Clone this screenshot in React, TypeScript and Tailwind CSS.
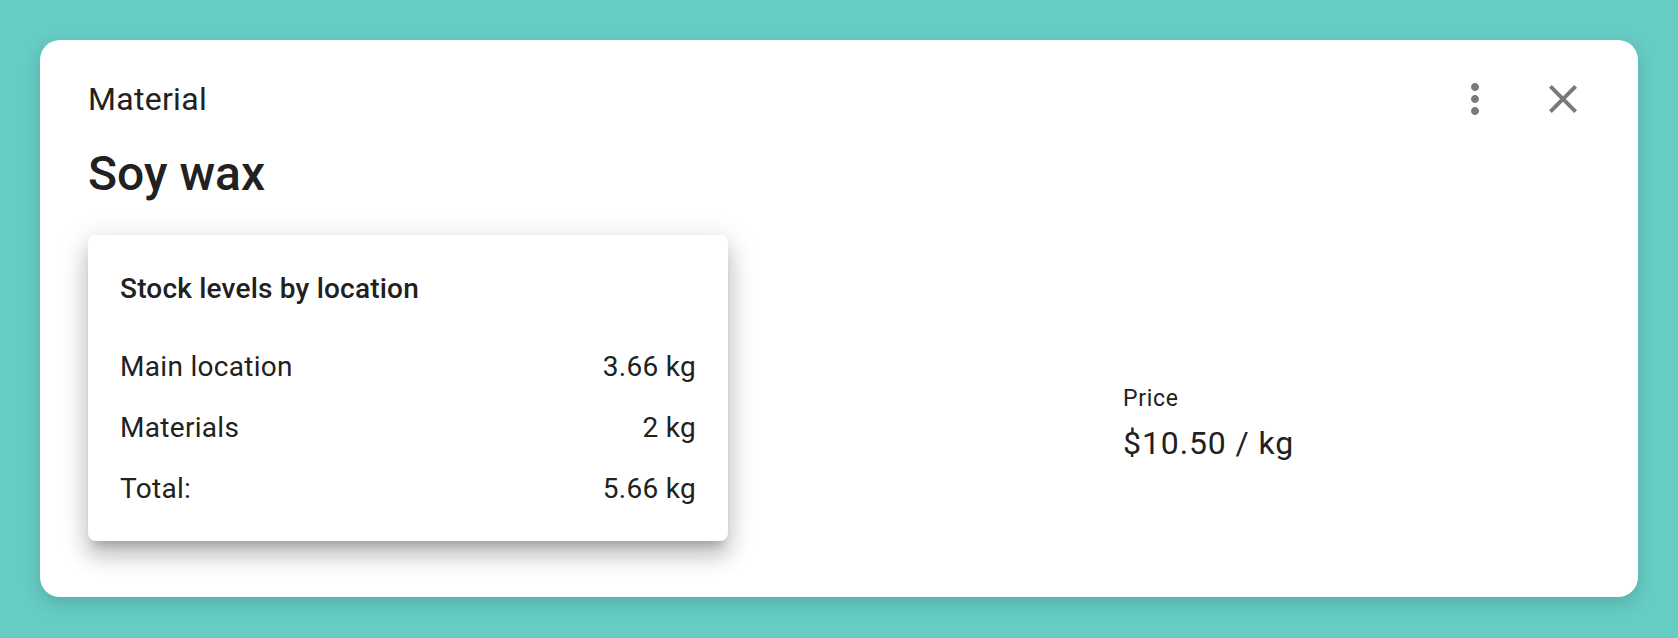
const MoreIcon = () => (
  <svg viewBox="0 0 24 24" className="h-12 w-12 fill-current">
    <path d="M12 8c1.1 0 2-.9 2-2s-.9-2-2-2-2 .9-2 2 .9 2 2 2zm0 2c-1.1 0-2 .9-2 2s.9 2 2 2 2-.9 2-2-.9-2-2-2zm0 6c-1.1 0-2 .9-2 2s.9 2 2 2 2-.9 2-2-.9-2-2-2z" />
  </svg>
);

const CloseIcon = () => (
  <svg viewBox="0 0 24 24" className="h-12 w-12 fill-current">
    <path d="M19 6.41 17.59 5 12 10.59 6.41 5 5 6.41 10.59 12 5 17.59 6.41 19 12 13.41 17.59 19 19 17.59 13.41 12z" />
  </svg>
);

const stock = [
  { name: "Main location", qty: "3.66 kg" },
  { name: "Materials", qty: "2 kg" },
  { name: "Total:", qty: "5.66 kg" },
];

export default function App() {
  return (
    <div className="min-h-[638px] bg-[#66cdc4] px-10 pt-10 pb-[41px] font-['Roboto',sans-serif] text-[#212121]">
      <div className="h-[557px] rounded-[20px] bg-white px-12 pt-[35px] shadow-[0_6px_18px_rgba(0,0,0,0.16)]">
        {/* header */}
        <div className="flex h-12 items-center justify-between">
          <div className="text-[32px] leading-[48px] tracking-[0.3px]">Material</div>
          <div className="mr-[3px] flex items-center gap-10 text-[#7a7a7a]">
            <button className="flex">
              <MoreIcon />
            </button>
            <button className="flex">
              <CloseIcon />
            </button>
          </div>
        </div>

        <h1 className="mt-5 text-[48px] font-medium leading-[61px]">Soy wax</h1>

        <div className="mt-[31px] flex items-start">
          <div className="w-[640px] rounded-[8px] bg-white p-8 shadow-[0_10px_10px_-6px_rgba(0,0,0,0.2),0_16px_20px_2px_rgba(0,0,0,0.14),0_6px_28px_4px_rgba(0,0,0,0.12)]">
            <div className="text-[28px] font-medium leading-[44px] tracking-[0.2px]">
              Stock levels by location
            </div>
            <div className="mt-9 flex flex-col gap-[21px]">
              {stock.map((row) => (
                <div
                  key={row.name}
                  className="flex justify-between text-[28px] leading-[40px] tracking-[0.3px]"
                >
                  <span>{row.name}</span>
                  <span>{row.qty}</span>
                </div>
              ))}
            </div>
          </div>

          <div className="ml-[395px] mt-[144px]">
            <div className="text-[23px] leading-[40px] tracking-[0.7px]">Price</div>
            <div className="text-[32px] leading-[48px] tracking-[0.9px]">$10.50 / kg</div>
          </div>
        </div>
      </div>
    </div>
  );
}
